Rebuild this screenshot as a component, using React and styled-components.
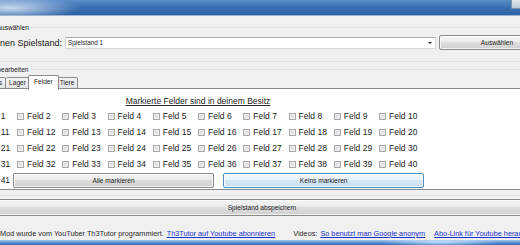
import React from 'react';
import styled, { createGlobalStyle } from 'styled-components';

const Global = createGlobalStyle`
  html, body { margin: 0; padding: 0; background: #f0f0f0; overflow: hidden; }
  body { font-family: "Liberation Sans", Arial, sans-serif; color: #1e1e1e; }
`;

const Viewport = styled.div`
  width: 520px;
  height: 245px;
  overflow: hidden;
`;

const Window = styled.div`
  margin-left: -100px;
  width: 680px;
  height: 245px;
  display: flex;
  flex-direction: column;
  background: #f0f0f0;
`;

const TitleBar = styled.div`
  height: 16px;
  flex: 0 0 16px;
  display: flex;
  align-items: center;
  justify-content: space-between;
  background:
    radial-gradient(ellipse 70px 12px at 110px 8px, rgba(225, 236, 248, 0.85), rgba(225, 236, 248, 0) 100%),
    linear-gradient(to bottom, #5d8ecb 0%, #3c71b3 45%, #2c61a5 100%);
  border-bottom: 1px solid #9fb6d3;
  box-sizing: border-box;
`;

const TitleText = styled.span`
  padding-left: 78px;
  font-size: 7.4px;
  color: #1b2c40;
`;

const CloseStub = styled.span`
  width: 8px;
  height: 8px;
  margin-right: 60px;
  align-self: flex-start;
  background: linear-gradient(#dfe6ee, #b9c7d6);
  border-left: 1px solid #7f95ae;
  border-bottom: 1px solid #7f95ae;
  border-bottom-left-radius: 2px;
`;

const Content = styled.div`
  flex: 1;
  display: flex;
  flex-direction: column;
  padding-left: 50px;
  width: 624px;
`;

const GroupBox = styled.div`
  position: relative;
  border: 1px solid #dbe2e7;
  border-radius: 3px;
  margin-top: ${p => p.$top}px;
  padding: ${p => p.$pad};
  box-sizing: border-box;
  height: ${p => p.$h}px;
`;

const Legend = styled.span`
  position: absolute;
  top: -5px;
  left: 11.7px;
  padding: 0 2px;
  font-size: 6.6px;
  line-height: 9px;
  background: #f0f0f0;
  color: #1e1e1e;
`;

const SelectRow = styled.div`
  display: flex;
  align-items: center;
  gap: 3px;
`;

const RowLabel = styled.span`
  flex: 0 0 111px;
  text-align: right;
  white-space: nowrap;
  font-size: 9px;
  color: #222;
`;

const Combo = styled.div`
  flex: 0 0 371px;
  height: 12px;
  box-sizing: border-box;
  background: #fff;
  border: 1px solid #d4d8de;
  border-top-color: #abadb3;
  display: flex;
  align-items: center;
  justify-content: space-between;
  padding: 0 3px 0 2px;
  font-size: 6.4px;
`;

const Arrow = styled.span`
  width: 0;
  height: 0;
  border-left: 2px solid transparent;
  border-right: 2px solid transparent;
  border-top: 2.5px solid #222;
`;

const Button = styled.button`
  flex: ${p => p.$flex || 'none'};
  width: ${p => (p.$w ? p.$w + 'px' : 'auto')};
  height: ${p => p.$h || 15}px;
  margin: ${p => p.$m || 0};
  padding: 0;
  box-sizing: border-box;
  border-radius: 2px;
  font-family: inherit;
  font-size: 6.6px;
  color: #1e1e1e;
  border: 1px solid ${p => (p.$focus ? '#4f8fc0' : '#8a8a8a')};
  background: ${p =>
    p.$focus
      ? 'linear-gradient(#f0f7fc 0%, #e4f0f8 50%, #d4e7f4 50%, #c9e0f1 100%)'
      : 'linear-gradient(#f3f3f3 0%, #ebebeb 50%, #dddddd 50%, #d0d0d0 100%)'};
  box-shadow: inset 0 0 0 1px rgba(255, 255, 255, 0.7);
`;

const Tabs = styled.div`
  display: flex;
  align-items: flex-end;
  height: 14px;
  margin-left: ${p => p.$left}px;
  position: relative;
  z-index: 1;
`;

const Tab = styled.div`
  box-sizing: border-box;
  height: ${p => (p.$active ? 15 : 12)}px;
  padding: 0 ${p => (p.$active ? 5 : 3)}px;
  margin: 0 ${p => (p.$active ? -2 : 0)}px ${p => (p.$active ? -1 : 0)}px;
  border: 1px solid #898c95;
  border-bottom: ${p => (p.$active ? 'none' : '1px solid #898c95')};
  border-left-width: ${p => (p.$first || p.$active ? 1 : 0)}px;
  border-radius: 2px 2px 0 0;
  background: ${p => (p.$active ? '#ffffff' : 'linear-gradient(#f3f3f3, #e4e4e4)')};
  font-size: 6.6px;
  line-height: ${p => (p.$active ? 12 : 10)}px;
  color: #1e1e1e;
  position: relative;
  z-index: ${p => (p.$active ? 2 : 1)};
`;

const Panel = styled.div`
  margin-left: 13px;
  margin-top: -1px;
  height: 102px;
  box-sizing: border-box;
  border: 1px solid #898c95;
  background: #fff;
  padding: 6px 0 0 6.75px;
`;

const Sheet = styled.div`
  width: 452.5px;
  display: flex;
  flex-direction: column;
`;

const Heading = styled.div`
  text-align: center;
  font-size: 8.5px;
  line-height: 12px;
  height: 13px;
  text-decoration: underline;
  color: #222;
`;

const Grid = styled.div`
  display: grid;
  grid-template-columns: repeat(10, 45.25px);
  grid-auto-rows: 16px;
`;

const Item = styled.label`
  display: flex;
  align-items: center;
  gap: 3px;
  font-size: 8.5px;
  color: #222;
  white-space: nowrap;
  ${p => (p.$w ? `flex: 0 0 ${p.$w}px;` : '')}
`;

const Box = styled.span`
  width: 7px;
  height: 7px;
  box-sizing: border-box;
  border: 1px solid #a9a9a9;
  background: linear-gradient(135deg, #d6d6d6, #f2f2f2);
  box-shadow: inset 0 0 0 1px #ececec;
  flex: none;
`;

const LastRow = styled.div`
  display: flex;
  align-items: center;
  height: 16px;
`;

const ButtonGap = styled.span`
  flex: 0 0 9px;
`;

const Footer = styled.div`
  margin-top: 13px;
  display: flex;
  align-items: center;
  gap: 3px;
  padding-left: 27px;
  font-size: 7.3px;
  line-height: 10px;
  color: #2b2b2b;
  white-space: nowrap;
`;

const Link = styled.a`
  color: #1a33cc;
  text-decoration: underline;
  margin-right: ${p => p.$mr || 0}px;
`;

const BottomFrame = styled.div`
  margin-top: auto;
  height: 5px;
  flex: 0 0 5px;
  background:
    radial-gradient(ellipse 60px 4px at 540px 2px, rgba(200, 230, 255, 0.9), rgba(200, 230, 255, 0)),
    linear-gradient(#a9c9ee, #4f86cc 60%, #3a6fb6);
`;

const rows = [0, 1, 2, 3];

export default function App() {
  return (
    <Viewport>
      <Global />
      <Window>
        <TitleBar>
          <TitleText>Editor</TitleText>
          <CloseStub />
        </TitleBar>
        <Content>
          <GroupBox $top={11} $h={35} $pad="7px 0 0 0">
            <Legend>Spielstand auswählen</Legend>
            <SelectRow>
              <RowLabel>Wähle deinen Spielstand:</RowLabel>
              <Combo>
                <span>Spielstand 1</span>
                <Arrow />
              </Combo>
              <Button $w={116}>Auswählen</Button>
            </SelectRow>
          </GroupBox>
          <GroupBox $top={7} $h={127} $pad="5px 0 0 0">
            <Legend>Spielstand bearbeiten</Legend>
            <Tabs $left={-5}>
              <Tab $first>Allgemein</Tab>
              <Tab>Items</Tab>
              <Tab>Lager</Tab>
              <Tab $active>Felder</Tab>
              <Tab>Tiere</Tab>
            </Tabs>
            <Panel>
              <Sheet>
                <Heading>Markierte Felder sind in deinem Besitz</Heading>
                <Grid>
                  {rows.flatMap(r =>
                    Array.from({ length: 10 }, (_, c) => (
                      <Item key={r * 10 + c}>
                        <Box />
                        Feld {r * 10 + c + 1}
                      </Item>
                    ))
                  )}
                </Grid>
                <LastRow>
                  <Item $w={41.25}>
                    <Box />
                    Feld 41
                  </Item>
                  <Button $flex="1" $h={15}>Alle markieren</Button>
                  <ButtonGap />
                  <Button $flex="1" $h={15} $focus>Keins markieren</Button>
                </LastRow>
              </Sheet>
            </Panel>
          </GroupBox>
          <Button $h={17} $m="3px 0 0 0">Spielstand abspeichern</Button>
          <Footer>
            <span>Dieser Mod wurde vom YouTuber Th3Tutor programmiert.</span>
            <Link $mr={15}>Th3Tutor auf Youtube abonnieren</Link>
            <span>Videos:</span>
            <Link $mr={6}>So benutzt man Google anonym</Link>
            <Link>Abo-Link für Youtube herausfinden</Link>
          </Footer>
        </Content>
        <BottomFrame />
      </Window>
    </Viewport>
  );
}
